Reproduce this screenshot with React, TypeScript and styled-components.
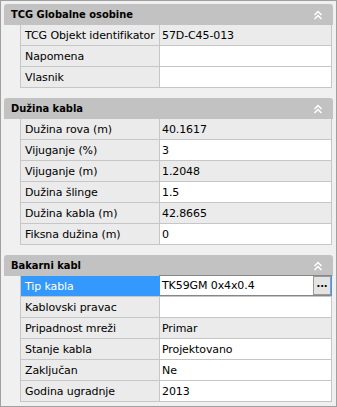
import * as React from "react";
import styled, { createGlobalStyle } from "styled-components";

const Global = createGlobalStyle`
  html, body { margin: 0; padding: 0; background: #f0f0f0; }
  body { font-family: "DejaVu Sans", Tahoma, sans-serif; }
`;

const Frame = styled.div`
  width: 337px;
  height: 407px;
  box-sizing: border-box;
  border: 1px solid #a0a0a0;
  padding: 3px;
  background: #f0f0f0;
  display: flex;
  flex-direction: column;
  gap: 10px;
  overflow: hidden;
`;

const Section = styled.div`
  display: flex;
  flex-direction: column;
`;

const Header = styled.div`
  height: 21px;
  display: flex;
  align-items: center;
  justify-content: space-between;
  padding: 0 10px 0 7px;
  background: #c2c2c2;
  border-radius: 3px 3px 0 0;
  font-family: "DejaVu Sans Condensed", "DejaVu Sans", sans-serif;
  font-size: 11px;
  font-weight: bold;
  color: #000;
`;

const Body = styled.div`
  padding-left: 16px;
`;

const Table = styled.div`
  border-left: 1px solid #c6c6c6;
  border-right: 1px solid #c6c6c6;
  margin-right: 1px;
`;

const Row = styled.div`
  display: grid;
  grid-template-columns: 139px 1fr;
  height: 21px;
  box-sizing: border-box;
  border-bottom: 1px solid #c6c6c6;
  font-size: 11px;
  letter-spacing: -0.1px;
  color: #000;
`;

const Name = styled.div<{ $selected?: boolean }>`
  display: flex;
  align-items: center;
  padding-left: 4px;
  border-right: 1px solid #c6c6c6;
  background: ${(p) => (p.$selected ? "#3399ff" : "#ebebeb")};
  color: ${(p) => (p.$selected ? "#fff" : "#000")};
  white-space: nowrap;
`;

const Value = styled.div<{ $readOnly?: boolean; $selected?: boolean }>`
  display: flex;
  align-items: center;
  justify-content: space-between;
  padding-left: 2px;
  background: ${(p) => (p.$readOnly ? "#ebebeb" : "#fff")};
  white-space: nowrap;
  ${(p) =>
    p.$selected &&
    `
    margin: -1px -1px -1px -1px;
    border: 1px solid #3399ff;
    height: 21px;
    box-sizing: border-box;
    padding-left: 2px;
  `}
`;

const DotsButton = styled.div`
  width: 18px;
  height: 19px;
  box-sizing: border-box;
  border: 1px solid #9a9a9a;
  background: #e4e4e4;
  display: flex;
  align-items: center;
  justify-content: center;
  font-weight: bold;
  font-size: 10px;
  line-height: 1;
  padding-bottom: 4px;
`;

const Collapse = () => (
  <svg width="10" height="10" viewBox="0 0 10 10">
    <path
      d="M1.5 5 L5 1.5 L8.5 5 M1.5 9 L5 5.5 L8.5 9"
      fill="none"
      stroke="#fff"
      strokeWidth="1.5"
    />
  </svg>
);

type Prop = {
  name: string;
  value: string;
  readOnly?: boolean;
  selected?: boolean;
};

const sections: { title: string; props: Prop[] }[] = [
  {
    title: "TCG Globalne osobine",
    props: [
      { name: "TCG Objekt identifikator", value: "57D-C45-013", readOnly: true },
      { name: "Napomena", value: "" },
      { name: "Vlasnik", value: "" },
    ],
  },
  {
    title: "Dužina kabla",
    props: [
      { name: "Dužina rova (m)", value: "40.1617", readOnly: true },
      { name: "Vijuganje (%)", value: "3" },
      { name: "Vijuganje (m)", value: "1.2048", readOnly: true },
      { name: "Dužina šlinge", value: "1.5" },
      { name: "Dužina kabla (m)", value: "42.8665", readOnly: true },
      { name: "Fiksna dužina (m)", value: "0" },
    ],
  },
  {
    title: "Bakarni kabl",
    props: [
      { name: "Tip kabla", value: "TK59GM 0x4x0.4", selected: true },
      { name: "Kablovski pravac", value: "" },
      { name: "Pripadnost mreži", value: "Primar", readOnly: true },
      { name: "Stanje kabla", value: "Projektovano" },
      { name: "Zaključan", value: "Ne" },
      { name: "Godina ugradnje", value: "2013" },
    ],
  },
];

export default function App() {
  return (
    <>
      <Global />
      <Frame>
        {sections.map((s) => (
          <Section key={s.title}>
            <Header>
              <span>{s.title}</span>
              <Collapse />
            </Header>
            <Body>
              <Table>
                {s.props.map((p) => (
                  <Row key={p.name}>
                    <Name $selected={p.selected}>{p.name}</Name>
                    <Value $readOnly={p.readOnly} $selected={p.selected}>
                      <span>{p.value}</span>
                      {p.selected && <DotsButton>...</DotsButton>}
                    </Value>
                  </Row>
                ))}
              </Table>
            </Body>
          </Section>
        ))}
      </Frame>
    </>
  );
}
